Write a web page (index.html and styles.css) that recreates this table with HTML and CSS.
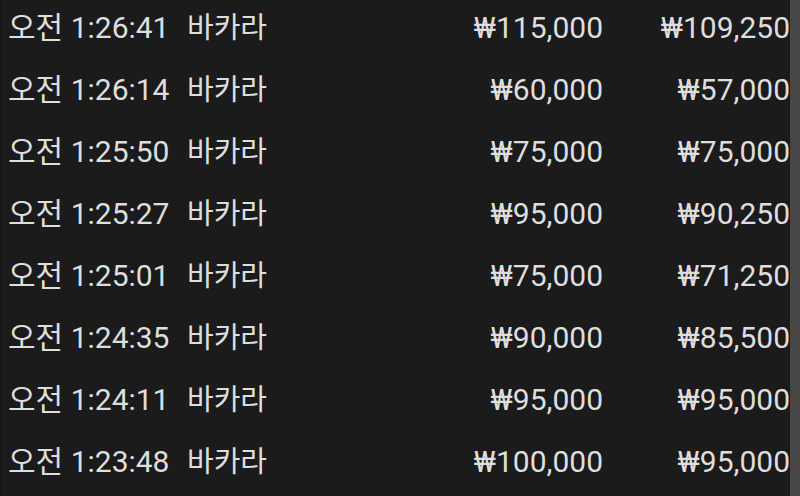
FILE: index.html
```html
<!DOCTYPE html>
<html lang="ko">
<head>
    <meta charset="UTF-8">
    <meta name="viewport" content="width=device-width, initial-scale=1.0">
    <title>베팅 내역</title>
    <link rel="stylesheet" href="styles.css">
</head>
<body>
    <div class="panel">
        <div class="history">
            <div class="row">
                <span class="time">오전 1:26:41</span>
                <span class="game">바카라</span>
                <span class="bet">₩115,000</span>
                <span class="win">₩109,250</span>
            </div>
            <div class="row">
                <span class="time">오전 1:26:14</span>
                <span class="game">바카라</span>
                <span class="bet">₩60,000</span>
                <span class="win">₩57,000</span>
            </div>
            <div class="row">
                <span class="time">오전 1:25:50</span>
                <span class="game">바카라</span>
                <span class="bet">₩75,000</span>
                <span class="win">₩75,000</span>
            </div>
            <div class="row">
                <span class="time">오전 1:25:27</span>
                <span class="game">바카라</span>
                <span class="bet">₩95,000</span>
                <span class="win">₩90,250</span>
            </div>
            <div class="row">
                <span class="time">오전 1:25:01</span>
                <span class="game">바카라</span>
                <span class="bet">₩75,000</span>
                <span class="win">₩71,250</span>
            </div>
            <div class="row">
                <span class="time">오전 1:24:35</span>
                <span class="game">바카라</span>
                <span class="bet">₩90,000</span>
                <span class="win">₩85,500</span>
            </div>
            <div class="row">
                <span class="time">오전 1:24:11</span>
                <span class="game">바카라</span>
                <span class="bet">₩95,000</span>
                <span class="win">₩95,000</span>
            </div>
            <div class="row">
                <span class="time">오전 1:23:48</span>
                <span class="game">바카라</span>
                <span class="bet">₩100,000</span>
                <span class="win">₩95,000</span>
            </div>
        </div>
        <div class="scrollbar"></div>
    </div>
</body>
</html>
```

FILE: styles.css
```css
/* General Styles */
body, html {
    margin: 0;
    padding: 0;
    background-color: #1b1b1b;
    font-family: Roboto, "Noto Sans CJK KR", sans-serif;
    color: #dedede;
    overflow: hidden;
}

/* Panel */
.panel {
    display: flex;
    height: 496px;
    border-left: 1px solid #141414;
}

.history {
    flex: 1;
    padding-left: 7px;
}

/* Rows */
.row {
    display: grid;
    grid-template-columns: 179px 1fr 160px 187px;
    font-size: 30px;
    line-height: 56px;
    padding-bottom: 6px;
    white-space: nowrap;
}

.game {
    font-size: 29px;
}

.bet, .win {
    text-align: right;
}

/* Scrollbar strip */
.scrollbar {
    width: 10px;
    background-color: #474747;
}
```
